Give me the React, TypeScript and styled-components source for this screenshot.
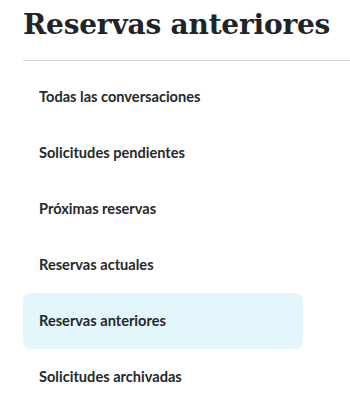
import { createGlobalStyle } from "styled-components";
import styled from "styled-components";

const GlobalStyle = createGlobalStyle`
  html, body {
    margin: 0;
    padding: 0;
    background: #ffffff;
  }
`;

const items = [
  "Todas las conversaciones",
  "Solicitudes pendientes",
  "Próximas reservas",
  "Reservas actuales",
  "Reservas anteriores",
  "Solicitudes archivadas",
];

export default function App() {
  const active = "Reservas anteriores";
  return (
    <>
      <GlobalStyle />
      <Panel>
        <Heading>Reservas anteriores</Heading>
        <Divider />
        <Menu>
          {items.map((item) => (
            <MenuItem key={item} $active={item == active}>
              {item}
            </MenuItem>
          ))}
        </Menu>
      </Panel>
    </>
  );
}

const Panel = styled.aside`
  width: 350px;
  padding: 7px 0 0 23px;
  box-sizing: border-box;
`;

const Heading = styled.h1`
  margin: 0;
  font-family: "DejaVu Serif", "Liberation Serif", serif;
  font-weight: 700;
  font-size: 28px;
  line-height: 36px;
  letter-spacing: -0.2px;
  color: #222326;
  white-space: nowrap;
`;

const Divider = styled.hr`
  margin: 17px 0 0;
  border: none;
  border-top: 1px solid #d3d6da;
`;

const Menu = styled.nav`
  display: flex;
  flex-direction: column;
  margin-top: 8px;
  width: 280px;
`;

const MenuItem = styled.div<{ $active?: boolean }>`
  height: 56px;
  display: flex;
  align-items: center;
  padding: 0 0 2px 16px;
  box-sizing: border-box;
  border-radius: 8px;
  background: ${(p) => (p.$active ? "#e3f6fb" : "transparent")};
  font-family: Lato, "Open Sans", sans-serif;
  font-weight: 700;
  font-size: 14.6px;
  color: #26282b;
  cursor: pointer;
`;
